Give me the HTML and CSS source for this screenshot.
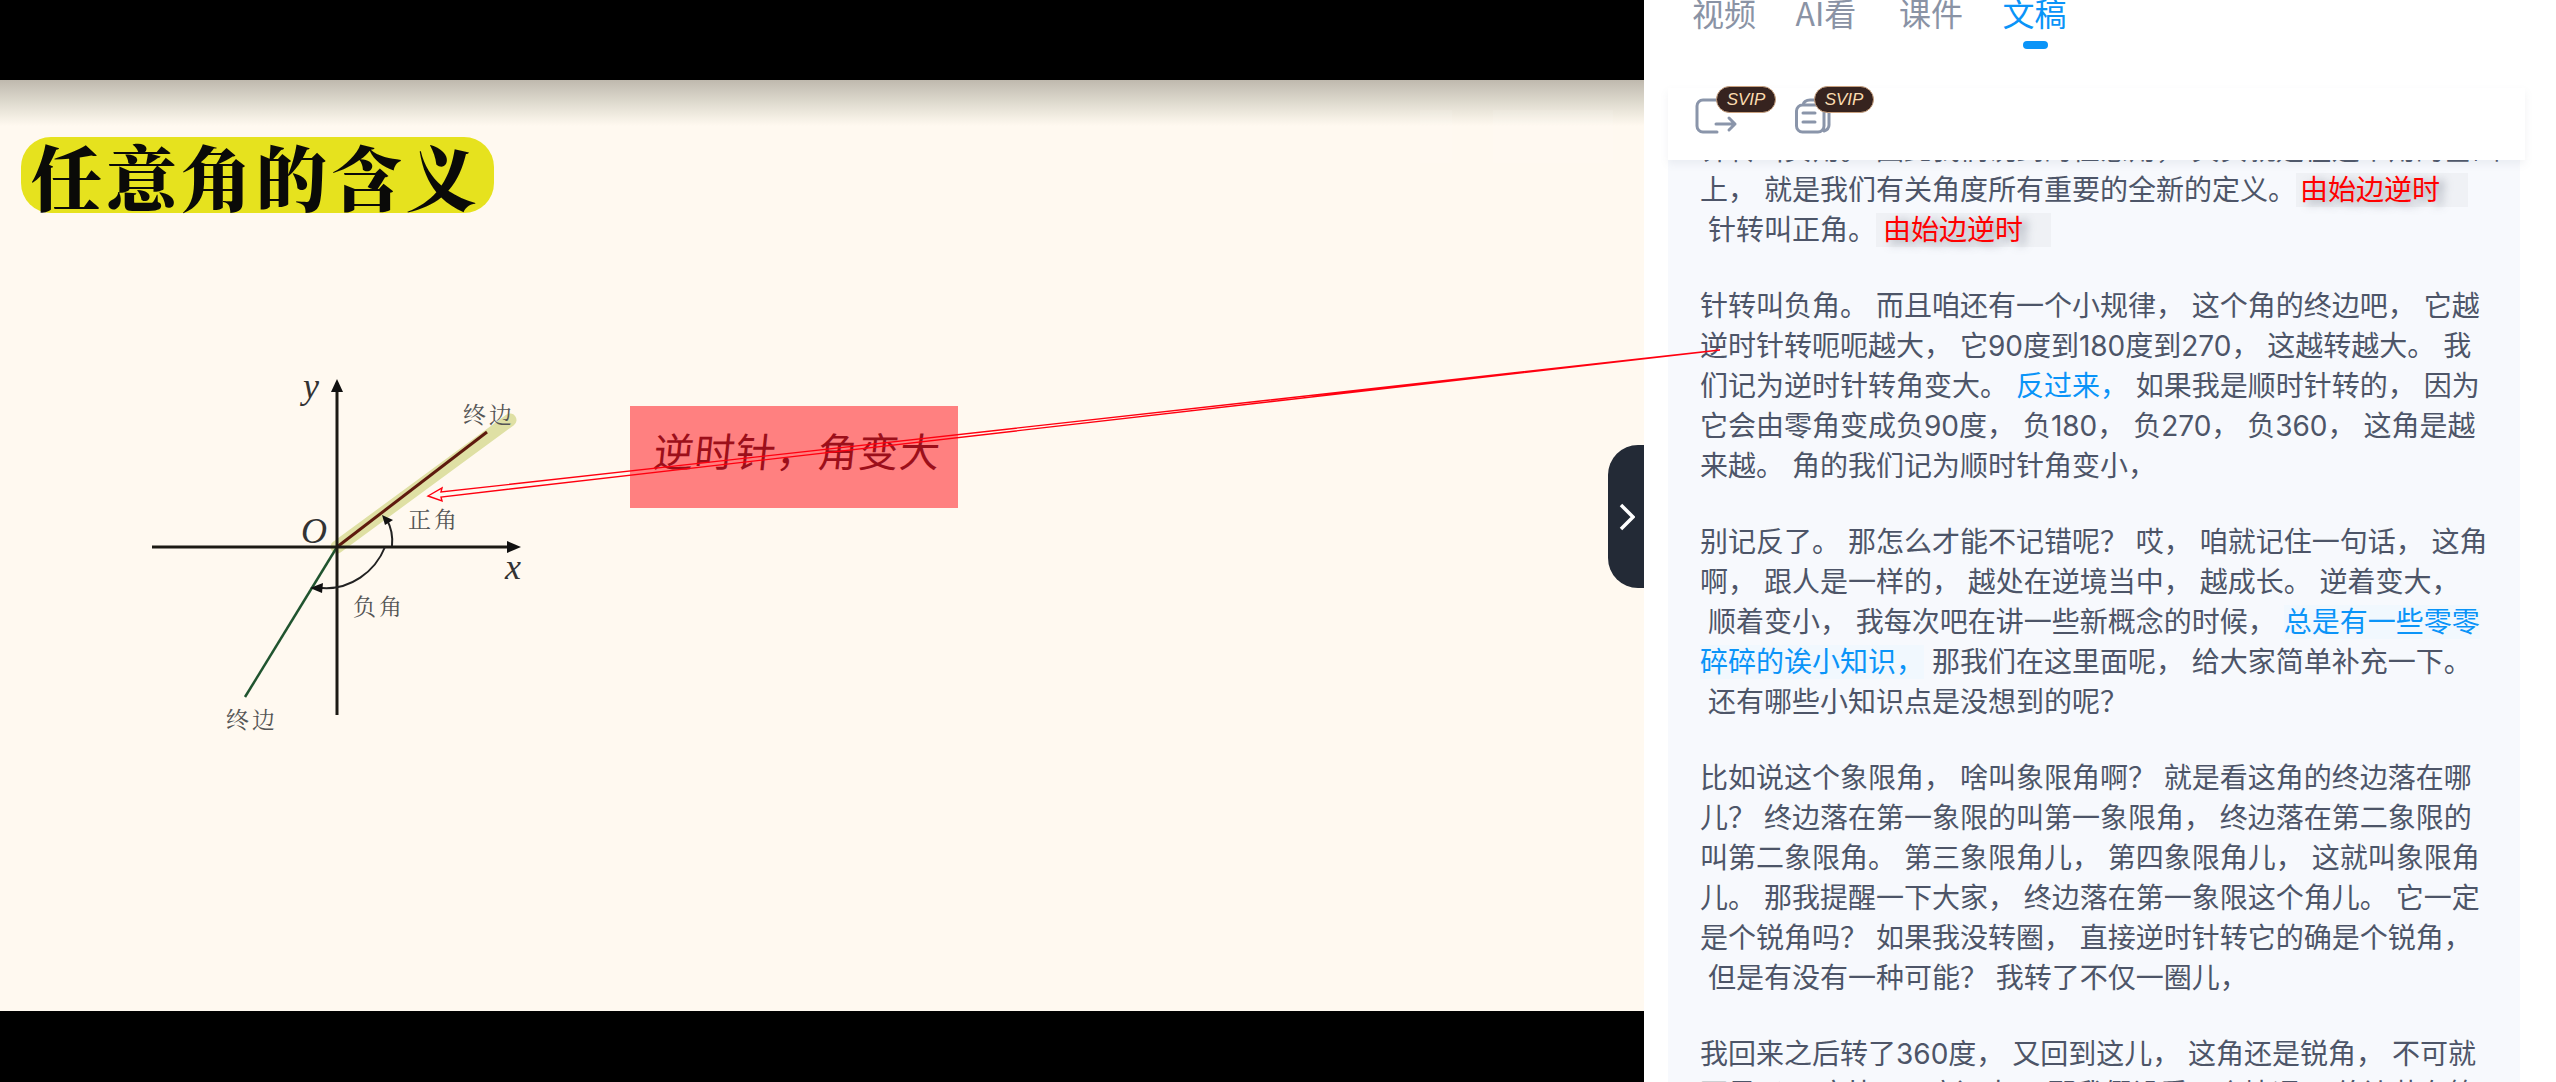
FILE: index.html
```html
<!DOCTYPE html>
<html lang="zh">
<head>
<meta charset="utf-8">
<title>文稿</title>
<link rel="stylesheet" href="styles.css">
</head>
<body>
<div class="app">
  <main class="stage">
    <div class="letterbox"></div>
    <div class="video">
      <div class="top-shade"></div>
      <h1 class="slide-title">任意角的含义</h1>
      <svg class="diagram" width="460" height="400" viewBox="130 350 460 400">
        <line x1="337" y1="547" x2="510" y2="420" class="glow"/>
        <line x1="337" y1="547" x2="487" y2="432" class="dark-red"/>
        <line x1="337" y1="547" x2="245" y2="697" class="green"/>
        <line x1="152" y1="547" x2="510" y2="547" class="axis"/>
        <line x1="337" y1="715" x2="337" y2="390" class="axis"/>
        <polygon points="337,379 331,392 343,392" class="fill"/>
        <polygon points="521,547 507,541 507,553" class="fill"/>
        <path d="M392 546 C393 535 391 527 387 520" class="arc"/>
        <polygon points="382,515 393,520 385,525" class="fill"/>
        <path d="M385 547 C375 572 350 590 322 588" class="arc"/>
        <polygon points="310,588 323,583 322,593" class="fill"/>
        <text x="303" y="398" class="math">y</text>
        <text x="301" y="543" class="math">O</text>
        <text x="505" y="579" class="math">x</text>
        <text x="463" y="423" class="label">终边</text>
        <text x="408" y="528" class="label">正角</text>
        <text x="353" y="615" class="label">负角</text>
        <text x="226" y="728" class="label">终边</text>
      </svg>
      <div class="note"><span class="note-text">逆时针，角变大</span></div>
      <div class="ghost ghost-a"></div>
      <div class="ghost ghost-b"></div>
    </div>
    <div class="letterbox"></div>
    <svg class="annotation" width="1724" height="1082" viewBox="0 0 1724 1082">
      <polygon points="1720,350 441,497 442,501 428,496 442,488 441,492" class="arrow-line"/>
    </svg>
    <button class="collapse" aria-label="收起">
      <svg width="16" height="28" viewBox="0 0 16 28"><path d="M2 2 L14 14 L2 26" class="chevron"/></svg>
    </button>
  </main>
  <aside class="panel">
    <nav class="tabs">
      <span class="tab">视频</span>
      <span class="tab">AI看</span>
      <span class="tab">课件</span>
      <span class="tab tab-active">文稿</span>
    </nav>
    <div class="tools">
      <span class="tool">
        <svg width="44" height="40" viewBox="0 0 44 40"><path d="M22 3 H8 a6 6 0 0 0 -6 6 V29 a6 6 0 0 0 6 6 H22 M21 27 H40 M34 21 L40 27 L34 33" class="tool-line"/></svg>
        <b class="svip">SVIP</b>
      </span>
      <span class="tool">
        <svg width="44" height="40" viewBox="0 0 44 40"><path d="M10 8 a7 5 0 0 1 7 -5 H28 M3.5 14 a6 6 0 0 1 6 -6 H25 a6 6 0 0 1 6 6 V29 a6 6 0 0 1 -6 6 H9.500 a6 6 0 0 1 -6 -6 Z M10 16 H22 M10 25 H22 M31 34 c3 -1 5 -3 5 -6 V14" class="tool-line"/></svg>
        <b class="svip">SVIP</b>
      </span>
    </div>
    <article class="transcript">
      <p>针转叫负角。 因此我们说到的任意角， 其实就是在这个角的基础<br>上， 就是我们有关角度所有重要的全新的定义。<mark>由始边逆时</mark><br>&nbsp;针转叫正角。<mark class="mark-b">由始边逆时</mark></p>
      <p>针转叫负角。 而且咱还有一个小规律， 这个角的终边吧， 它越<br>逆时针转呃呃越大， 它90度到180度到270， 这越转越大。 我<br>们记为逆时针转角变大。 <em class="hl">反过来，</em> 如果我是顺时针转的， 因为<br>它会由零角变成负90度， 负180， 负270， 负360， 这角是越<br>来越。 角的我们记为顺时针角变小，</p>
      <p>别记反了。 那怎么才能不记错呢？ 哎， 咱就记住一句话， 这角<br>啊， 跟人是一样的， 越处在逆境当中， 越成长。 逆着变大，<br>&nbsp;顺着变小， 我每次吧在讲一些新概念的时候， <em class="hl hl-box">总是有一些零零</em><br><em class="hl hl-box">碎碎的诶小知识，</em> 那我们在这里面呢， 给大家简单补充一下。<br>&nbsp;还有哪些小知识点是没想到的呢？</p>
      <p>比如说这个象限角， 啥叫象限角啊？ 就是看这角的终边落在哪<br>儿？ 终边落在第一象限的叫第一象限角， 终边落在第二象限的<br>叫第二象限角。 第三象限角儿， 第四象限角儿， 这就叫象限角<br>儿。 那我提醒一下大家， 终边落在第一象限这个角儿。 它一定<br>是个锐角吗？ 如果我没转圈， 直接逆时针转它的确是个锐角，<br>&nbsp;但是有没有一种可能？ 我转了不仅一圈儿，</p>
      <p>我回来之后转了360度， 又回到这儿， 这角还是锐角， 不可就<br>不是了。 它比360度还大。 那我假设看一个情况， 终边落在第</p>
    </article>
  </aside>
</div>
</body>
</html>
```
FILE: styles.css
```css
* { box-sizing: border-box; }
html, body { margin: 0; height: 100%; overflow: hidden; background: #fff; }
body { font-family: "Noto Sans CJK SC", "Noto Sans", sans-serif; }
.app { display: flex; width: 2556px; height: 1082px; }
.stage { position: relative; width: 1644px; height: 1082px; display: flex; flex-direction: column; background: #000; flex: none; }
.letterbox { background: #000; height: 80px; flex: none; }
.letterbox:last-of-type { height: 71px; }
.video { position: relative; flex: 1; background: #fff9f0; overflow: hidden; }
.top-shade { height: 46px; background: linear-gradient(#bfb9ae, #dcd8cc 45%, #f3eee3 80%, #fff9f0); }
.slide-title { position: absolute; left: 21px; top: 57px; width: 473px; height: 76px; margin: 0; border-radius: 30px; background: #e6e21e; color: #0a0a08; font-family: "Noto Serif CJK SC", "Noto Sans CJK SC", serif; font-size: 71px; font-weight: 900; line-height: 74px; letter-spacing: 4px; padding-left: 10px; white-space: nowrap; }
.diagram { position: absolute; left: 130px; top: 270px; }
.axis { stroke: #1c1a14; stroke-width: 3; }
.glow { stroke: #dfe0a4; stroke-width: 13; stroke-linecap: round; }
.dark-red { stroke: #5e1a0e; stroke-width: 3; }
.green { stroke: #20542f; stroke-width: 2.5; }
.fill { fill: #111; }
.arc { fill: none; stroke: #222; stroke-width: 2; }
.math { font-family: "Liberation Serif", serif; font-style: italic; font-size: 36px; fill: #333; }
.label { font-family: "Noto Serif CJK SC", "Noto Sans CJK SC", serif; font-size: 23px; fill: #555; letter-spacing: 3px; }
.note { position: absolute; left: 630px; top: 326px; width: 328px; height: 102px; padding: 0 0 14px 6px; background: #ff8080; display: flex; align-items: center; justify-content: center; }
.note-text { font-family: "Noto Sans CJK SC", sans-serif; font-size: 40px; font-weight: 400; letter-spacing: 1px; color: #9c0f1a; transform: skewX(-6deg); white-space: nowrap; }
.ghost { position: absolute; top: 30px; height: 53px; background: rgba(255,255,255,.1); }
.ghost-a { left: 1420px; width: 32px; }
.ghost-b { left: 1493px; width: 120px; }
.annotation { position: absolute; left: 0; top: 0; z-index: 5; pointer-events: none; }
.arrow-line { fill: none; stroke: #ff0010; stroke-width: 1.4; }
.collapse { position: absolute; right: 0; top: 445px; width: 36px; height: 143px; padding: 0 0 0 2px; border: 0; border-radius: 30px 0 0 30px; background: #232a36; display: flex; align-items: center; justify-content: center; }
.chevron { fill: none; stroke: #fff; stroke-width: 3.5; }
.panel { position: relative; flex: 1; height: 1082px; overflow: hidden; background: #fff; }
.tabs { display: flex; gap: 39.5px; padding-left: 48px; height: 100px; margin-top: -12px; font-size: 32px; color: #8a93a5; line-height: 48px; }
.tab { position: relative; min-width: 64px; }
.tab-active { color: #0a94f8; }
.tab-active::after { content: ""; position: absolute; left: 20px; top: 53px; width: 25px; height: 8px; border-radius: 4px; background: #0a94f8; }
.tools { position: relative; z-index: 2; width: 857px; height: 72px; margin-left: 24px; background: #fff; box-shadow: 0 4px 8px rgba(120,130,150,.1); display: flex; gap: 34px; padding-left: 27px; }
.tool { position: relative; width: 64px; height: 72px; display: block; }
.tool svg { position: absolute; left: 0; top: 9px; }
.tool-line { fill: none; stroke: #8a95aa; stroke-width: 3; stroke-linecap: round; stroke-linejoin: round; }
.svip { position: absolute; left: 21px; top: -2px; width: 60px; height: 27px; border-radius: 14px; background: #36231f; border: 1px solid #c8a07e; color: #fbdcb0; font: italic 400 17px/25px "Liberation Sans", sans-serif; text-align: center; }
.transcript { height: 954px; margin: -31px 36px 0 24px; padding: 1px 32px 0; background: #f7f9fd; color: #4d5568; font-family: Inter, "Noto Sans CJK SC", sans-serif; font-size: 28px; line-height: 40px; white-space: nowrap; overflow: hidden; }
.transcript p { margin: 0 0 36px; }
mark { background: #eff1f5; color: #ff0000; text-shadow: 6px 3px 9px rgba(70,80,100,.55); padding: 0 28px 0 4px; }
.mark-b { padding-left: 7px; }
.hl { color: #0a94f8; font-style: normal; }
.hl-box { background: #f1f8fe; }
```
